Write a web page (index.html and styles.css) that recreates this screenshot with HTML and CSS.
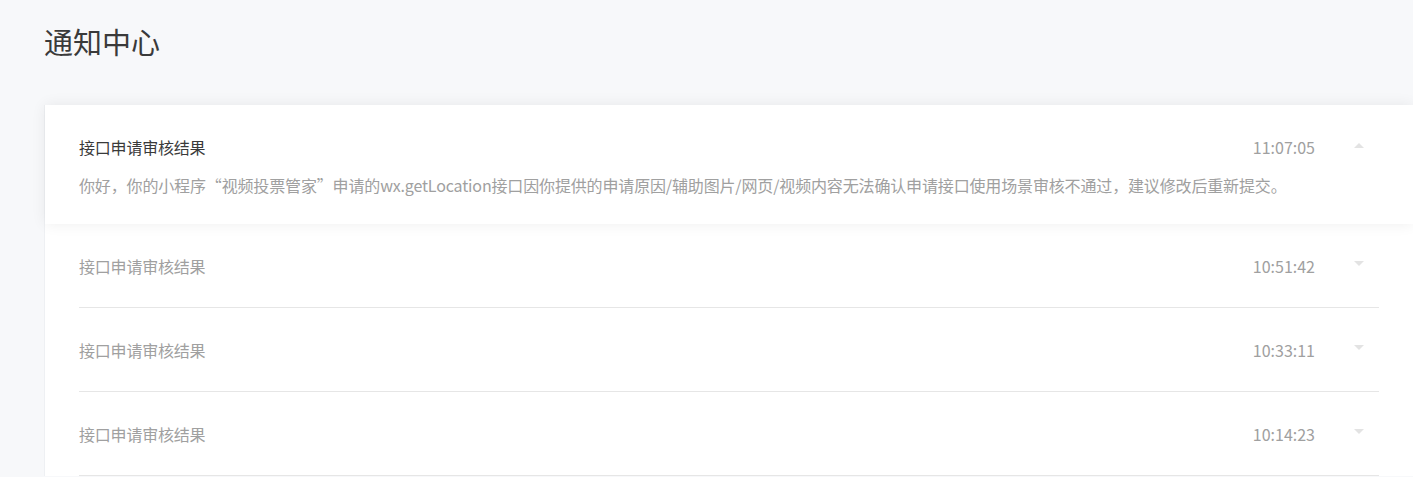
FILE: index.html
```html
<!DOCTYPE html>
<html lang="zh-CN">
<head>
<meta charset="utf-8">
<title>通知中心</title>
<link rel="stylesheet" href="styles.css">
</head>
<body>
<div class="page">
  <h1 class="page-title">通知中心</h1>
  <div class="card">
    <div class="item item-open">
      <div class="item-head">
        <span class="item-title">接口申请审核结果</span>
        <span class="item-time">11:07:05</span>
        <span class="caret caret-up"></span>
      </div>
      <div class="item-desc">你好，你的小程序“视频投票管家”申请的wx.getLocation接口因你提供的申请原因/辅助图片/网页/视频内容无法确认申请接口使用场景审核不通过，建议修改后重新提交。</div>
    </div>
    <div class="row">
      <div class="row-inner">
        <span class="item-title">接口申请审核结果</span>
        <span class="item-time">10:51:42</span>
        <span class="caret caret-down"></span>
      </div>
    </div>
    <div class="row">
      <div class="row-inner">
        <span class="item-title">接口申请审核结果</span>
        <span class="item-time">10:33:11</span>
        <span class="caret caret-down"></span>
      </div>
    </div>
    <div class="row">
      <div class="row-inner">
        <span class="item-title">接口申请审核结果</span>
        <span class="item-time">10:14:23</span>
        <span class="caret caret-down"></span>
      </div>
    </div>
  </div>
</div>
</body>
</html>
```
FILE: styles.css
```css
html, body {
  margin: 0;
  padding: 0;
  background: #f7f8fa;
  font-family: "Noto Sans CJK SC", "Noto Sans", sans-serif;
}
.page {
  padding: 20px 0 0 45px;
}
.page-title {
  margin: 0 0 0 -1px;
  font-size: 29px;
  line-height: 42px;
  font-weight: 400;
  color: #3a3a3a;
}
.card {
  margin-top: 43px;
  background: #fff;
  box-shadow: -1px 0 0 #eef0f3;
}
.item-open {
  position: relative;
  z-index: 1;
  background: #fff;
  padding: 31px 34px 28px;
  box-shadow: 0 0 14px rgba(0, 0, 0, 0.07);
}
.item-head, .row-inner {
  display: flex;
  align-items: center;
}
.item-title {
  flex: 1;
  font-size: 16px;
  line-height: 22px;
  color: #a0a0a0;
  letter-spacing: -0.2px;
}
.item-open .item-title {
  color: #3a3a3a;
}
.item-time {
  font-size: 16px;
  line-height: 22px;
  color: #a0a0a0;
}
.caret {
  width: 0;
  height: 0;
  margin-left: 39px;
  margin-right: 15px;
  border-left: 5px solid transparent;
  border-right: 5px solid transparent;
}
.caret-up {
  border-bottom: 5px solid #e3e3e3;
  margin-top: -3px;
}
.caret-down {
  border-top: 5px solid #e3e3e3;
  margin-top: -5px;
}
.item-desc {
  margin-top: 16px;
  font-size: 16px;
  line-height: 22px;
  color: #a0a0a0;
  letter-spacing: -0.15px;
}
.row {
  padding: 0 34px;
}
.row-inner {
  box-sizing: border-box;
  height: 84px;
  border-bottom: 1px solid #e6e6e6;
}
```
